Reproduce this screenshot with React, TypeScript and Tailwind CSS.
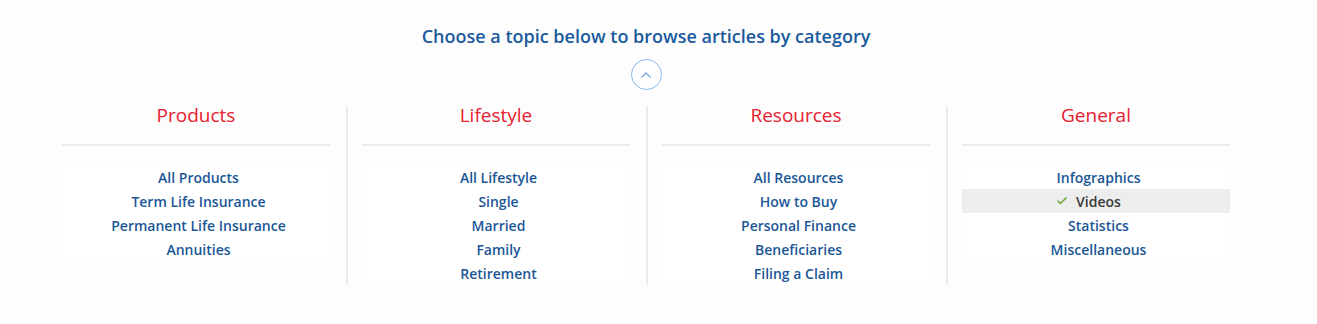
import { Check } from "lucide-react";

type Column = { title: string; items: string[]; active?: string };

const COLUMNS: Column[] = [
  {
    title: "Products",
    items: ["All Products", "Term Life Insurance", "Permanent Life Insurance", "Annuities"],
  },
  { title: "Lifestyle", items: ["All Lifestyle", "Single", "Married", "Family", "Retirement"] },
  {
    title: "Resources",
    items: ["All Resources", "How to Buy", "Personal Finance", "Beneficiaries", "Filing a Claim"],
  },
  {
    title: "General",
    items: ["Infographics", "Videos", "Statistics", "Miscellaneous"],
    active: "Videos",
  },
];

function TopicColumn({ col, first }: { col: Column; first: boolean }) {
  return (
    <div
      className={"w-[300px] pr-4 " + (first ? "pl-4" : "border-l-2 border-[#ececec] pl-[14px]")}
    >
      <h3 className="text-center text-[19px] leading-[19px] font-normal text-[#e8202f]">
        {col.title}
      </h3>
      <div className="mt-[19px] h-[2px] bg-[#ebebeb]" />
      <ul className="mt-[19px] bg-white">
        {col.items.map((item) => {
          const on = item === col.active;
          return (
            <li
              key={item}
              className={
                "flex h-6 items-center justify-center pl-[5px] text-[14px] font-semibold " +
                (on ? "bg-[#ededed] text-[#3a3a3a]" : "text-[#1b5797]")
              }
            >
              <span className="relative">
                {on && (
                  <Check
                    className="absolute top-1/2 right-full mr-[8px] size-3 -translate-y-1/2 text-[#6aa534]"
                    strokeWidth={3}
                  />
                )}
                {item}
              </span>
            </li>
          );
        })}
      </ul>
    </div>
  );
}

export default function App() {
  return (
    <div
      className="min-h-[324px] w-full bg-[#fdfdfd] pt-[24px]"
      style={{ fontFamily: '"Open Sans", "Liberation Sans", sans-serif' }}
    >
      <div className="ml-[46px] w-[1200px]">
        <h2 className="text-center text-[18px] leading-[24px] font-semibold text-[#1a5a9d]">
          Choose a topic below to browse articles by category
        </h2>
        <div className="mt-[11px] flex justify-center">
          <button
            type="button"
            className="flex size-[31px] items-center justify-center rounded-full border border-[#8ab8ec] bg-white"
          >
            <svg width="12" height="8" viewBox="0 0 12 8" fill="none">
              <path d="M1.5 6.5 6 2l4.5 4.5" stroke="#7aa9e0" strokeWidth="1.3" />
            </svg>
          </button>
        </div>
        <div className="mt-[16px] flex items-stretch">
          {COLUMNS.map((col, i) => (
            <TopicColumn key={col.title} col={col} first={i === 0} />
          ))}
        </div>
      </div>
    </div>
  );
}
